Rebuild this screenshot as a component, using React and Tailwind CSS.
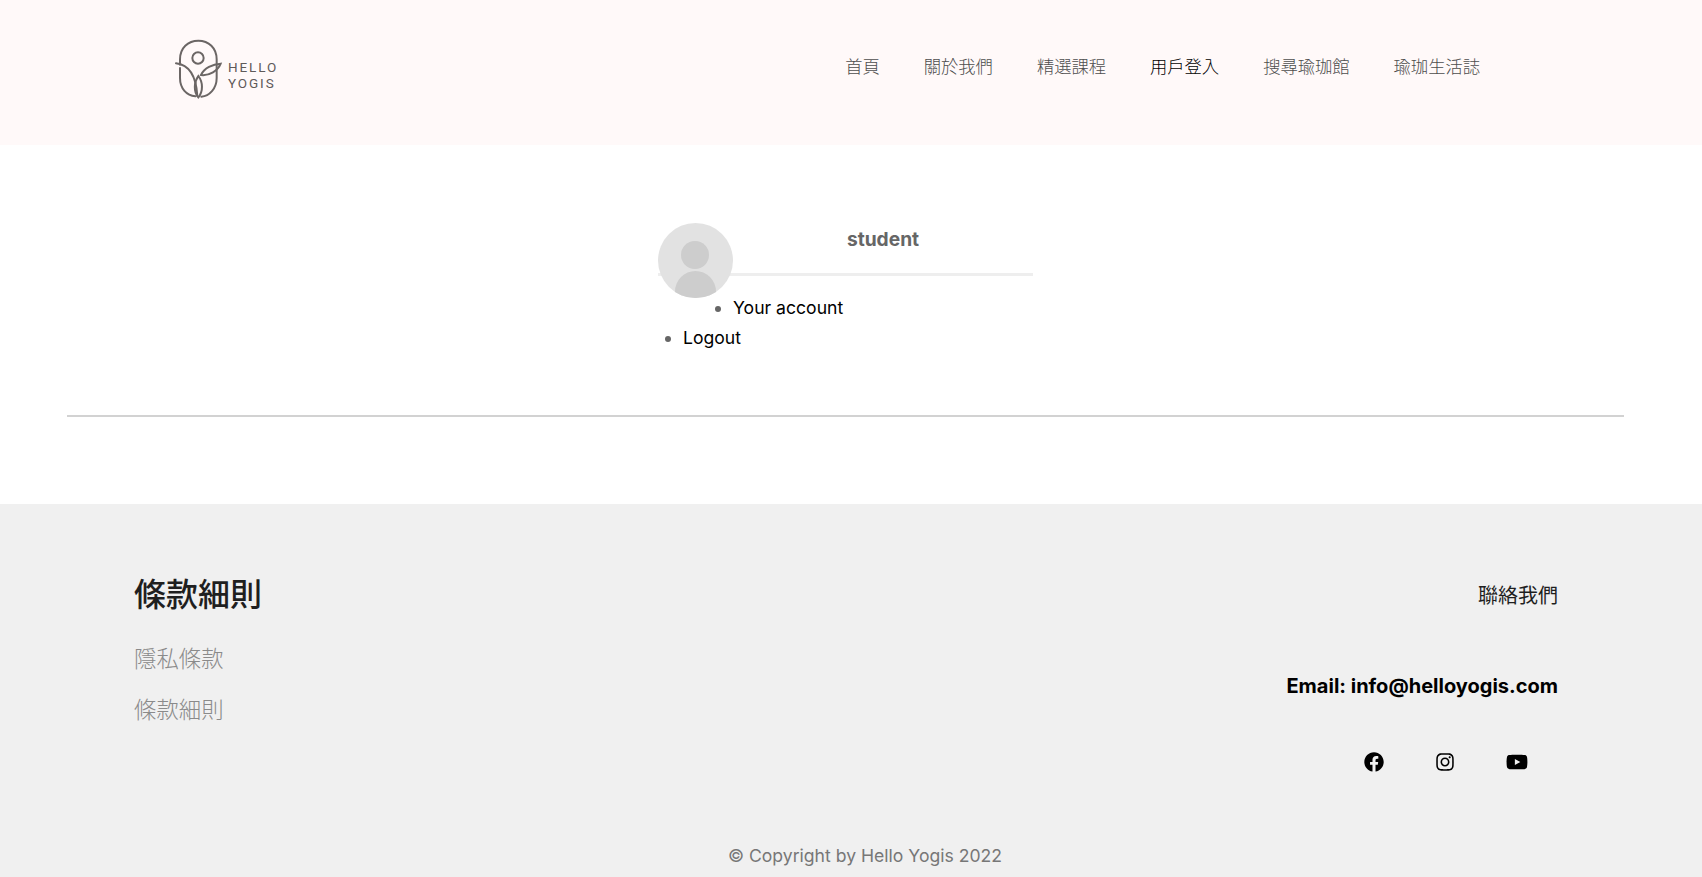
import React from "react";
import { FaFacebook, FaInstagram, FaYoutube } from "react-icons/fa";

const navItems = ["首頁", "關於我們", "精選課程", "用戶登入", "搜尋瑜珈館", "瑜珈生活誌"];

function Logo() {
  return (
    <div className="flex items-center">
      <svg width="50" height="60" viewBox="70 55 150 180" fill="none" stroke="#6b6665" strokeWidth="6" strokeLinecap="round">
        <path d="M88 132V116C88 82 112 60 143 60C174 60 198 82 198 116V172C198 204 176 226 152 228M88 142V172C88 204 108 224 134 227" />
        <circle cx="142" cy="112" r="17" />
        <path d="M76 128C112 132 136 160 140 226" />
        <path d="M143 230C128 212 130 184 143 166C157 184 158 212 143 230Z" />
        <path d="M151 163C160 142 186 130 210 129C202 150 176 166 151 163Z" />
      </svg>
      <div className="ml-[4px] pt-[11px] font-['Roboto',sans-serif] text-[13.5px] leading-[16px] tracking-[1.9px] text-[#5f5a59]">
        <div>HELLO</div>
        <div>YOGIS</div>
      </div>
    </div>
  );
}

export default function App() {
  return (
    <div className="h-[877px] overflow-hidden bg-white font-['Inter','Noto_Sans_CJK_JP',sans-serif]">
      <header className="flex h-[145px] items-start justify-between bg-[#fff9f9] pl-[174px] pr-[222px]">
        <div className="pt-[39px]">
          <Logo />
        </div>
        <nav className="flex gap-[44px] pt-[54px] text-[17.3px] leading-[26px] font-light text-[#4d4d4d]">
          {navItems.map((item) => (
            <a key={item} className={item === "用戶登入" ? "text-black" : ""}>
              {item}
            </a>
          ))}
        </nav>
      </header>

      <main className="h-[359px] pr-[78px] pl-[67px] pt-[78px]">
        <div className="ml-[591px] h-[192px] w-[375px]">
          <div className="relative float-left flex h-[75px] w-[75px] items-end justify-center overflow-hidden rounded-full bg-[#e2e2e2]">
            <div className="absolute top-[18px] left-[23px] h-[28px] w-[28px] rounded-full bg-[#cdcdcd]" />
            <div className="h-[27px] w-[41px] rounded-t-full bg-[#cdcdcd]" />
          </div>
          <div className="pt-[4px] text-center text-[19.2px] leading-[24px] font-bold text-[#666666]">student</div>
          <div className="mt-[22px] h-[3px] bg-[#eeeeee]" />
          <ul className="mt-[17px] list-disc pl-[25px] text-[17.6px] leading-[30px] text-black marker:text-[#666666]">
            <li>Your account</li>
            <li>Logout</li>
          </ul>
        </div>
        <div className="h-[2px] bg-[#d2d2d2]" />
      </main>

      <footer className="h-[373px] bg-[#f0f0f0] px-[134px] pt-[70px]">
        <div className="flex h-[270px] justify-between">
          <div>
            <h2 className="text-[32px] leading-[42px] font-medium text-[#1f1f1f]">條款細則</h2>
            <div className="mt-[30px] text-[22.4px] leading-[26px] font-light text-[#8a8a8a]">隱私條款</div>
            <div className="mt-[25px] text-[22.4px] leading-[26px] font-light text-[#8a8a8a]">條款細則</div>
          </div>
          <div className="flex flex-col items-end pr-[10px]">
            <div className="pt-[9px] text-[20px] leading-[26px] text-[#1f1f1f]">聯絡我們</div>
            <div className="mt-[64px] text-[20px] leading-[26px] font-bold text-black">Email: info@helloyogis.com</div>
            <div className="mt-[53px] mr-[30px] flex gap-[51px] text-[20px] text-black">
              <FaFacebook />
              <FaInstagram />
              <FaYoutube className="w-[22px]" />
            </div>
          </div>
        </div>
        <div className="pl-[28px] text-center text-[17.6px] leading-[24px] text-[#777777]">© Copyright by Hello Yogis 2022</div>
      </footer>
    </div>
  );
}
